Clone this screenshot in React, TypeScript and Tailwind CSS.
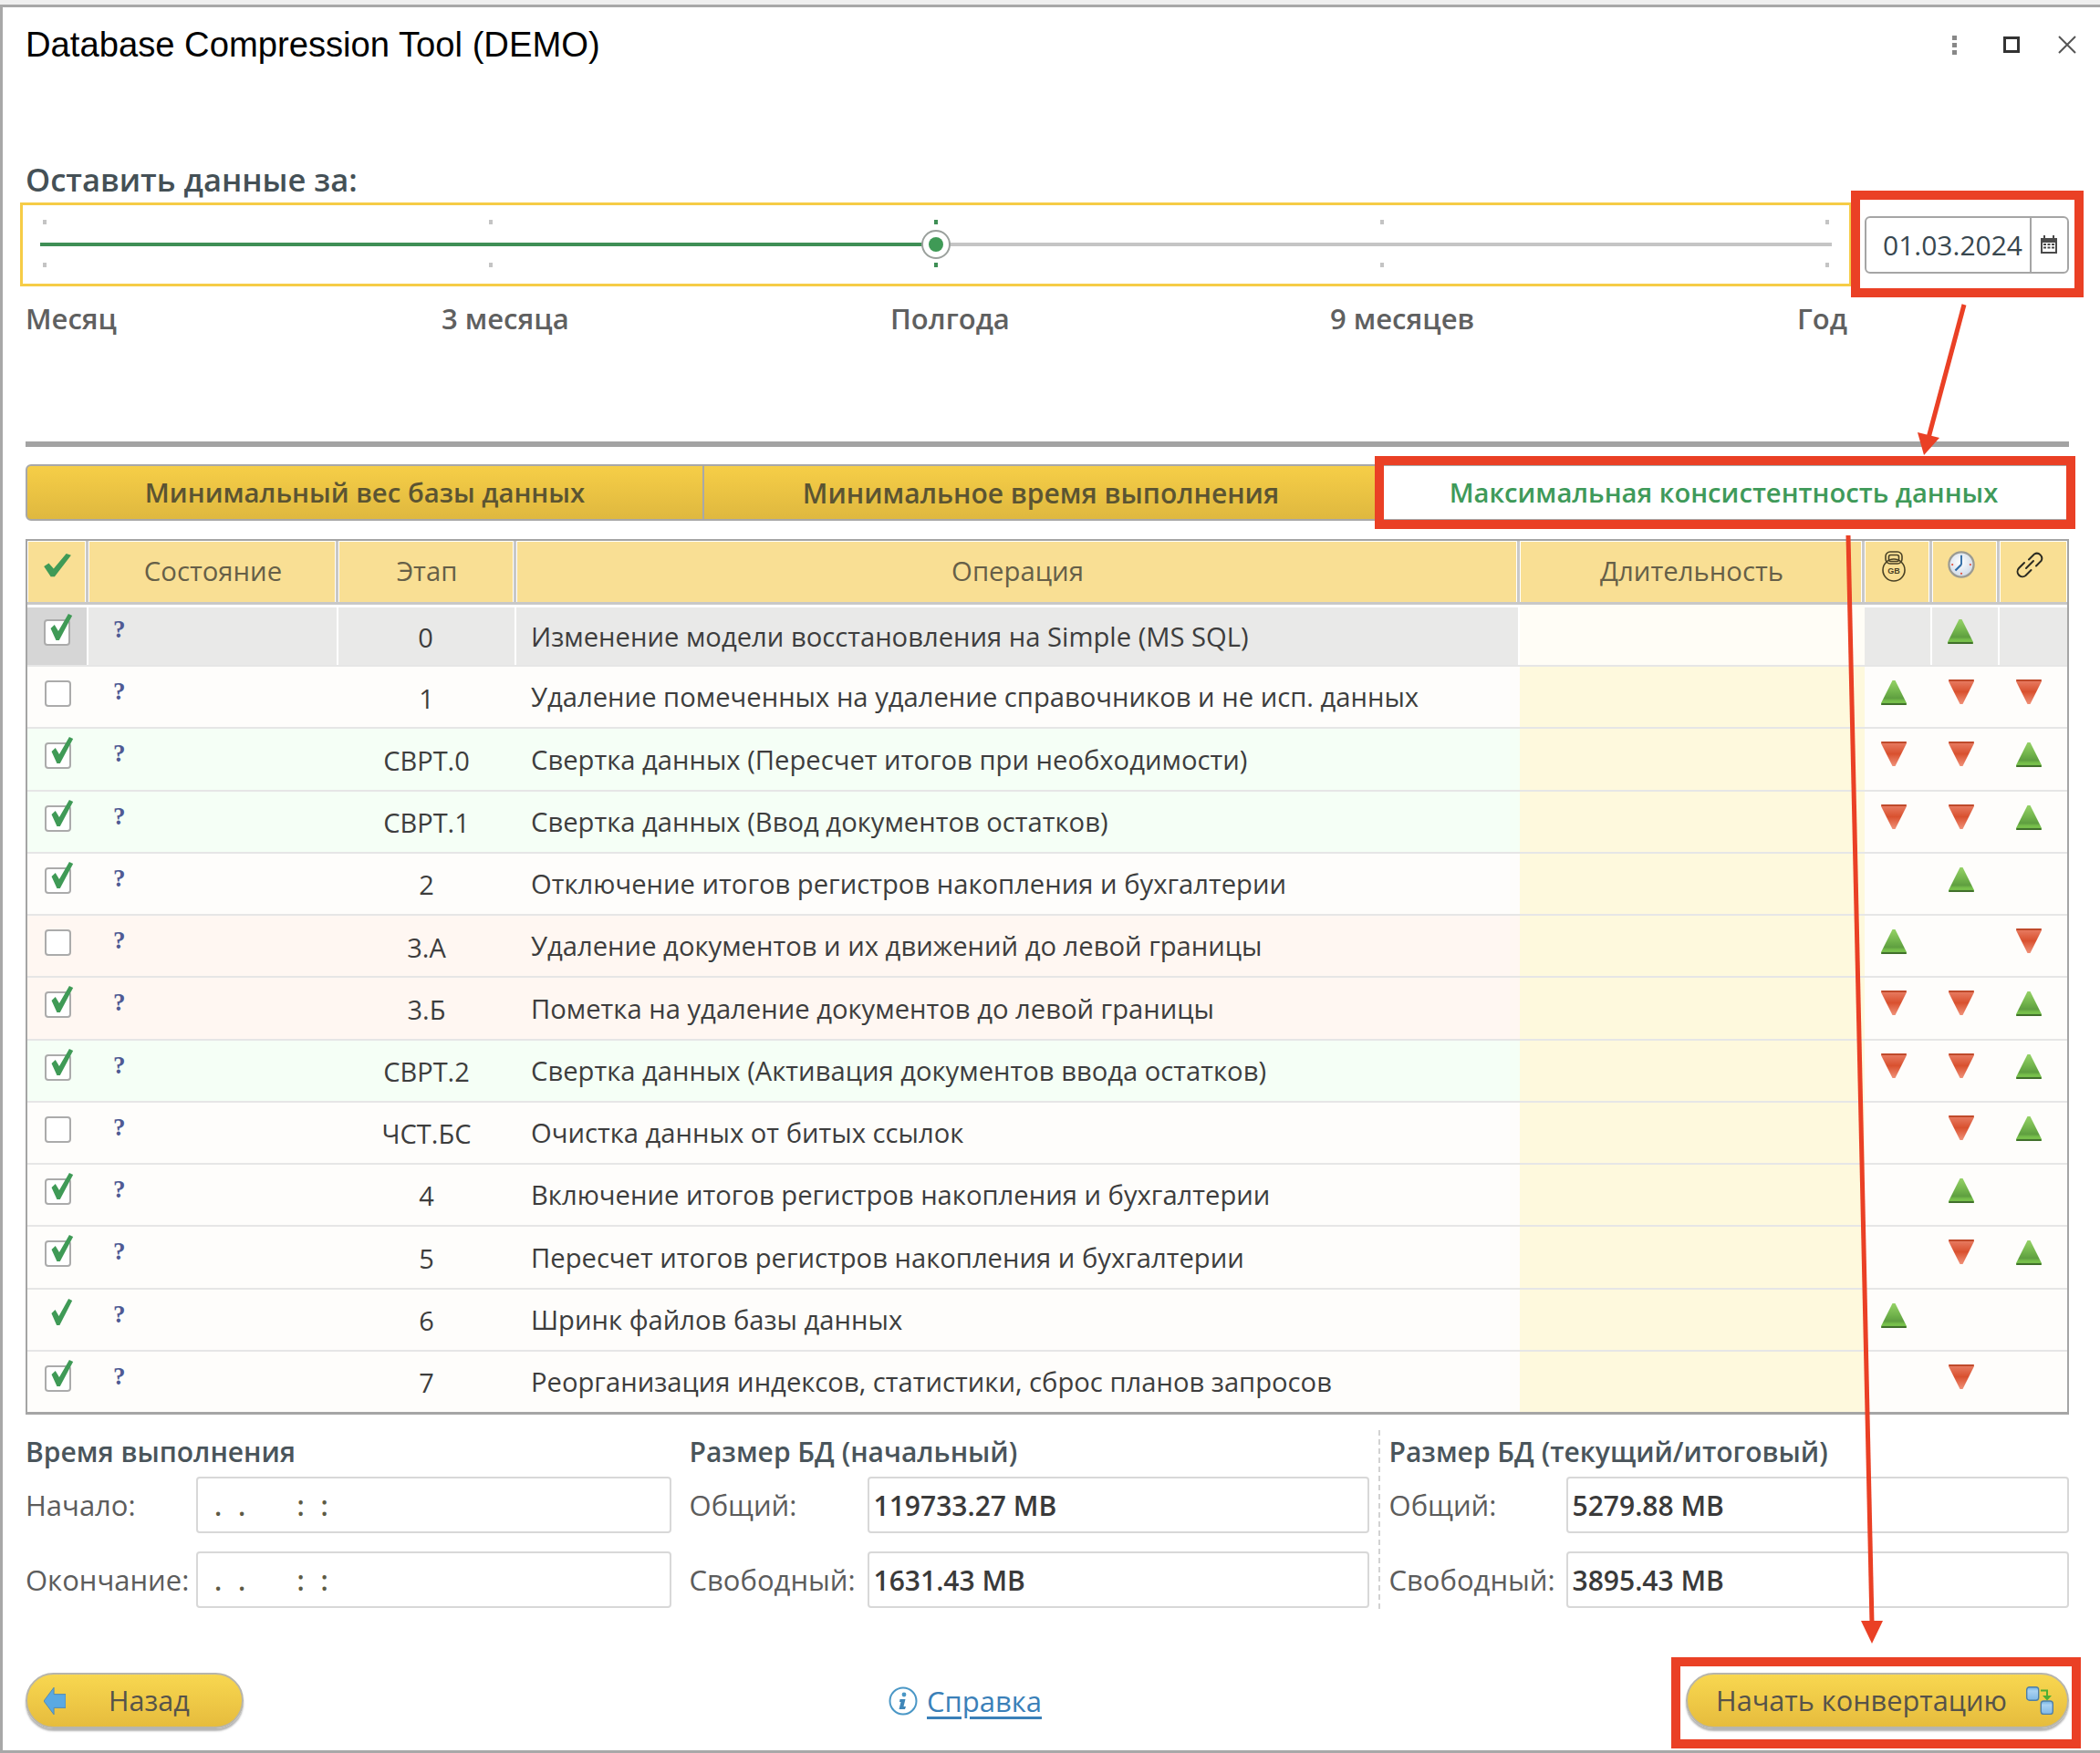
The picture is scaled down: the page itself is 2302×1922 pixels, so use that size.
import React from 'react';

type Tone = 'selected' | 'plain' | 'green' | 'orange';

const rows: { check: 'on' | 'off' | 'bare'; stage: string; op: string; marks: number[]; tone: Tone }[] = [
  { check: 'on', stage: '0', op: 'Изменение модели восстановления на Simple (MS SQL)', marks: [0, 1, 0], tone: 'selected' },
  { check: 'off', stage: '1', op: 'Удаление помеченных на удаление справочников и не исп. данных', marks: [1, -1, -1], tone: 'plain' },
  { check: 'on', stage: 'СВРТ.0', op: 'Свертка данных (Пересчет итогов при необходимости)', marks: [-1, -1, 1], tone: 'green' },
  { check: 'on', stage: 'СВРТ.1', op: 'Свертка данных (Ввод документов остатков)', marks: [-1, -1, 1], tone: 'green' },
  { check: 'on', stage: '2', op: 'Отключение итогов регистров накопления и бухгалтерии', marks: [0, 1, 0], tone: 'plain' },
  { check: 'off', stage: '3.А', op: 'Удаление документов и их движений до левой границы', marks: [1, 0, -1], tone: 'orange' },
  { check: 'on', stage: '3.Б', op: 'Пометка на удаление документов до левой границы', marks: [-1, -1, 1], tone: 'orange' },
  { check: 'on', stage: 'СВРТ.2', op: 'Свертка данных (Активация документов ввода остатков)', marks: [-1, -1, 1], tone: 'green' },
  { check: 'off', stage: 'ЧСТ.БС', op: 'Очистка данных от битых ссылок', marks: [0, -1, 1], tone: 'plain' },
  { check: 'on', stage: '4', op: 'Включение итогов регистров накопления и бухгалтерии', marks: [0, 1, 0], tone: 'plain' },
  { check: 'on', stage: '5', op: 'Пересчет итогов регистров накопления и бухгалтерии', marks: [0, -1, 1], tone: 'plain' },
  { check: 'bare', stage: '6', op: 'Шринк файлов базы данных', marks: [1, 0, 0], tone: 'plain' },
  { check: 'on', stage: '7', op: 'Реорганизация индексов, статистики, сброс планов запросов', marks: [0, -1, 0], tone: 'plain' },
];

const toneBg: Record<Tone, string> = {
  selected: 'bg-[#e9e9e8]',
  plain: 'bg-[#fefdfb]',
  green: 'bg-[#f5fff6]',
  orange: 'bg-[#fff7f2]',
};

const gridCols = 'grid grid-cols-[67px_274px_195px_1100px_378px_74px_74px_74px]';

function CheckMark({ className }: { className: string }) {
  return (
    <svg viewBox="0 0 32 32" className={className} preserveAspectRatio="none">
      <path d="M3 17 L8 13 L13 20 L26 1 L31 3 L14 30 L10 30 Z" fill="#3f9a56" />
    </svg>
  );
}

function Checkbox({ state }: { state: 'on' | 'off' | 'bare' }) {
  if (state === 'bare') {
    return (
      <div className="relative w-[29px] h-[29px]">
        <CheckMark className="absolute left-[5px] top-[-6px] w-[26px] h-[32px]" />
      </div>
    );
  }
  return (
    <div className="relative w-[29px] h-[29px] rounded-[4px] border-2 border-[#ababab] bg-white">
      {state === 'on' && <CheckMark className="absolute left-[3px] top-[-9px] w-[27px] h-[32px]" />}
    </div>
  );
}

function Triangle({ up }: { up: boolean }) {
  return (
    <svg viewBox="0 0 28 28" className="w-[28px] h-[28px]">
      {up ? (
        <>
          <path d="M12.5 1 L15.5 1 L28 26 L28 28 L0 28 L0 26 Z" fill="url(#triUp)" />
          <path d="M0.5 27 L27.5 27" stroke="#41702c" strokeWidth="2" />
        </>
      ) : (
        <>
          <path d="M0 0 L28 0 L28 2 L15.5 27 L12.5 27 L0 2 Z" fill="url(#triDown)" />
          <path d="M0.5 1 L27.5 1" stroke="#bf4a2b" strokeWidth="2" />
        </>
      )}
    </svg>
  );
}

function Kettlebell() {
  return (
    <svg viewBox="0 0 28 34" className="w-[28px] h-[34px]" fill="none" stroke="#4a4226" strokeWidth="1.6">
      <rect x="5" y="1" width="18" height="13" rx="5" />
      <rect x="8.5" y="4.5" width="11" height="7" rx="2" />
      <circle cx="14" cy="21" r="12" />
      <text x="14" y="25" textAnchor="middle" fontSize="9" fontWeight="700" fill="#4a4226" stroke="none" fontFamily="Liberation Sans, sans-serif">GB</text>
    </svg>
  );
}

function Clock() {
  return (
    <svg viewBox="0 0 32 32" className="w-[30px] h-[30px]">
      <circle cx="16" cy="16" r="14.5" fill="url(#clockFace)" stroke="#9b9b93" strokeWidth="2.4" />
      <path d="M16 16 L16 5" stroke="#2f6ca6" strokeWidth="2" />
      <path d="M16 16 L9 23" stroke="#2f6ca6" strokeWidth="2.4" />
      <circle cx="5.5" cy="16" r="1.2" fill="#e5533d" />
      <circle cx="26.5" cy="16" r="1.2" fill="#e5533d" />
      <circle cx="16" cy="26.5" r="1.2" fill="#e5533d" />
    </svg>
  );
}

function ChainLink() {
  return (
    <svg viewBox="0 0 30 30" className="w-[30px] h-[30px]" fill="none" stroke="#2b2b22" strokeWidth="2" strokeLinecap="round">
      <path d="M14 9.5 L20 3.5 A5.5 5.5 0 0 1 27.5 11 L22 16.5" />
      <path d="M9 13 L3 19 A5.5 5.5 0 0 0 10.5 27 L16.5 21" />
      <path d="M11 19 L19 11" />
    </svg>
  );
}

function HeaderCell({ children }: { children?: React.ReactNode }) {
  return (
    <div className="bg-white px-[1px] pt-[1px] border-r-[3px] border-[#c8c8c8]">
      <div className="h-full flex items-center justify-center pl-[2px] text-[29.3px] text-[#665f48] bg-[#f9df94]">{children}</div>
    </div>
  );
}

function HeaderIcon({ children, last, inset }: { children: React.ReactNode; last?: boolean; inset?: boolean }) {
  return (
    <div className={`bg-white px-[1px] pt-[1px] ${last ? '' : 'border-r-[3px] border-[#c8c8c8]'}`}>
      <div className={`h-full flex justify-center pt-[10px] bg-[#f9df94] ${inset ? 'pr-[8px]' : ''}`}>{children}</div>
    </div>
  );
}

function DataTable() {
  return (
    <div className="mt-[20px] w-[2240px] border-2 border-[#a5a5a5] border-b-[3px]">
      <div className={`${gridCols} h-[70px] border-b-[3px] border-[#c8c8c8]`}>
        <HeaderIcon><CheckMark className="w-[34px] h-[28px] mt-[2px]" /></HeaderIcon>
        <HeaderCell>Состояние</HeaderCell>
        <HeaderCell>Этап</HeaderCell>
        <HeaderCell>Операция</HeaderCell>
        <HeaderCell>Длительность</HeaderCell>
        <HeaderIcon inset><Kettlebell /></HeaderIcon>
        <HeaderIcon inset><Clock /></HeaderIcon>
        <HeaderIcon last inset><ChainLink /></HeaderIcon>
      </div>
      <div className="h-[885px] flex flex-col">
        {rows.map((row, i) => {
          const sel = row.tone === 'selected';
          const gap = sel ? 'border-r-2 border-t-[3px] border-white' : '';
          return (
            <div key={i} className={`${gridCols} flex-1 min-h-0 ${i < rows.length - 1 ? 'border-b-2 border-[#e6e6e6]' : ''}`}>
              <div className={`flex justify-center ${sel ? 'pt-[13px] bg-[#d6d6d6]' : `pt-[15px] ${toneBg[row.tone]}`} ${gap}`}>
                <Checkbox state={row.check} />
              </div>
              <div className={`pl-[27px] ${sel ? 'pt-[8px]' : 'pt-[11px]'} ${toneBg[row.tone]} ${gap} font-['Liberation_Serif',serif] font-bold text-[27px] leading-[32px] text-[#4f5a94]`}>?</div>
              <div className={`flex items-center justify-center pt-[2px] pr-[2px] text-[29px] text-[#3d3d3d] ${toneBg[row.tone]} ${gap}`}>{row.stage}</div>
              <div className={`flex items-center pl-[16px] pt-[2px] text-[29.2px] text-[#3d3d3d] whitespace-nowrap ${toneBg[row.tone]} ${gap}`}>{row.op}</div>
              <div className={sel ? 'bg-[#fffdf6]' : 'bg-[#fef9dd]'} />
              {row.marks.map((m, j) => (
                <div key={j} className={`flex justify-center pr-[10px] ${sel ? `pt-[12px] bg-[#e9e9e8] ${j < 2 ? gap : 'border-t-[3px] border-white'}` : 'pt-[14px] bg-[#fefdfb]'}`}>
                  {m !== 0 && <Triangle up={m > 0} />}
                </div>
              ))}
            </div>
          );
        })}
      </div>
    </div>
  );
}

function Field({ value, muted }: { value: string; muted?: boolean }) {
  return (
    <div className={`h-[62px] flex-1 min-w-0 rounded-[4px] border-2 border-[#d8d8d8] flex items-center bg-white ${muted ? 'pl-[18px] text-[#5d5a44] whitespace-pre font-semibold tracking-[5px]' : 'pl-[5px] font-semibold text-[#3a3a3a]'} text-[30px]`}>
      {value}
    </div>
  );
}

function InfoGroup({ title, items, labelWidth, width, muted }: { title: string; items: [string, string][]; labelWidth: string; width: string; muted?: boolean }) {
  return (
    <div className={width}>
      <div className="h-[38px] mb-[9px] flex items-center text-[30px] font-semibold text-[#4a555b]">{title}</div>
      <div className="flex flex-col gap-[20px]">
        {items.map(([label, value]) => (
          <div key={label} className="flex items-center">
            <div className={`${labelWidth} text-[31px] font-medium text-[#5c5c5c] whitespace-nowrap`}>{label}</div>
            <Field value={value} muted={muted} />
          </div>
        ))}
      </div>
    </div>
  );
}

const pillBtn = 'h-[61px] rounded-full border-2 border-[#b7b5ac] shadow-[0_3px_2px_rgba(120,120,120,0.55)] bg-gradient-to-b from-[#f8d750] to-[#e6bc3d] flex items-center text-[#56534a]';

export default function App() {
  return (
    <div className="relative w-[2302px] h-[1922px] pt-[5px] bg-[#efefef] overflow-hidden font-['Open_Sans',sans-serif]">
      <svg className="absolute w-0 h-0">
        <defs>
          <linearGradient id="triUp" x1="0" y1="0" x2="0" y2="1">
            <stop offset="0" stopColor="#95d266" />
            <stop offset="0.5" stopColor="#6fb14a" />
            <stop offset="0.72" stopColor="#5f9f40" />
            <stop offset="0.85" stopColor="#79c24c" />
            <stop offset="1" stopColor="#6fb548" />
          </linearGradient>
          <linearGradient id="triDown" x1="0" y1="0" x2="0" y2="1">
            <stop offset="0" stopColor="#e98067" />
            <stop offset="0.5" stopColor="#d9512f" />
            <stop offset="1" stopColor="#f09178" />
          </linearGradient>
          <radialGradient id="clockFace" cx="0.45" cy="0.4" r="0.7">
            <stop offset="0" stopColor="#ffffff" />
            <stop offset="1" stopColor="#c7d4e4" />
          </radialGradient>
          <linearGradient id="dbFill" x1="0" y1="0" x2="0" y2="1">
            <stop offset="0" stopColor="#6fb0e0" />
            <stop offset="0.3" stopColor="#a9d2f2" />
            <stop offset="1" stopColor="#7fb8e6" />
          </linearGradient>
        </defs>
      </svg>

      <div className="h-[1917px] border-t-[3px] border-b-[3px] border-l-[3px] border-[#a8a8a8] bg-white flex flex-col pl-[25px] pr-[34px]">
        {/* Title bar */}
        <div className="h-[82px] flex items-center justify-between">
          <div className="font-['Liberation_Sans',sans-serif] text-[38.2px] text-black">Database Compression Tool (DEMO)</div>
          <div className="flex items-center mr-[-8px]">
            <div className="flex flex-col gap-[3px] mr-[51px]">
              <span className="w-[5px] h-[5px] bg-[#888]" />
              <span className="w-[5px] h-[5px] bg-[#888]" />
              <span className="w-[5px] h-[5px] bg-[#888]" />
            </div>
            <div className="w-[18px] h-[18px] border-[3px] border-[#333] mr-[42px]" />
            <svg viewBox="0 0 20 20" className="w-[20px] h-[20px]" stroke="#555" strokeWidth="2">
              <path d="M1 1 L19 19 M19 1 L1 19" />
            </svg>
          </div>
        </div>

        {/* Period slider */}
        <div className="mt-[85px] h-[44px] flex items-center text-[34.5px] font-semibold text-[#445056]">Оставить данные за:</div>
        <div className="mt-[3px] -ml-[6px] flex items-center">
          <div className="w-[2008px] h-[92px] border-[3px] border-[#f6cc46] pt-[16px]">
            <div className="ml-[22px] w-[1958px] flex justify-between">
              <span className="w-[4px] h-[5px] bg-[#c4c4c4]" />
              <span className="w-[4px] h-[5px] bg-[#c4c4c4]" />
              <span className="w-[4px] h-[5px] bg-[#3f8f55]" />
              <span className="w-[4px] h-[5px] bg-[#c4c4c4]" />
              <span className="w-[4px] h-[5px] bg-[#c4c4c4]" />
            </div>
            <div className="relative mt-[20px] ml-[19px] w-[1964px] h-[4px] flex">
              <div className="w-[982px] bg-[#3f8f55]" />
              <div className="flex-1 bg-[#c5c5c5]" />
              <div className="absolute left-[966px] top-[-14px] w-[32px] h-[32px] rounded-full border-2 border-[#9aa09c] bg-white flex items-center justify-center">
                <div className="w-[16px] h-[16px] rounded-full bg-[#3f9a56]" />
              </div>
            </div>
            <div className="mt-[18px] ml-[22px] w-[1958px] flex justify-between">
              <span className="w-[4px] h-[5px] bg-[#c4c4c4]" />
              <span className="w-[4px] h-[5px] bg-[#c4c4c4]" />
              <span className="w-[4px] h-[5px] bg-[#3f8f55]" />
              <span className="w-[4px] h-[5px] bg-[#c4c4c4]" />
              <span className="w-[4px] h-[5px] bg-[#c4c4c4]" />
            </div>
          </div>
          <div className="ml-[14px] w-[224px] h-[63px] rounded-[6px] border-2 border-[#a5a5a5] flex">
            <div className="w-[179px] flex items-center justify-end pr-[8px] text-[30px] text-[#38474f]">01.03.2024</div>
            <div className="flex-1 border-l-2 border-[#a5a5a5] flex items-center justify-center pr-[2px]">
              <svg viewBox="0 0 18 20" className="w-[18px] h-[20px]">
                <path d="M0 3 H3 V0 H5 V3 H13 V0 H15 V3 H18 V20 H0 Z" fill="#4a4a4a" />
                <rect x="2" y="8" width="14" height="10" fill="#fff" />
                <path d="M3 9 h3 v2 h-3z M7.5 9 h3 v2 h-3z M12 9 h3 v2 h-3z M3 12.5 h3 v2 h-3z M7.5 12.5 h3 v2 h-3z M12 12.5 h3 v2 h-3z" fill="#4a4a4a" />
              </svg>
            </div>
          </div>
        </div>
        <div className="mt-[12px] h-[40px] grid grid-cols-[456px_492px_482px_512px_1fr] items-center text-[31px] font-semibold text-[#5f6060]">
          <span>Месяц</span>
          <span>3 месяца</span>
          <span>Полгода</span>
          <span>9 месяцев</span>
          <span>Год</span>
        </div>

        <div className="mt-[118px] h-[6px] bg-[#a3a3a3] shrink-0" />

        {/* Tabs */}
        <div className="mt-[19px] h-[62px] flex shrink-0 font-semibold whitespace-nowrap">
          <div className="w-[744px] rounded-l-[6px] border-2 border-[#a8a8a8] bg-gradient-to-b from-[#f6ce47] to-[#dfb83f] flex items-center justify-center pt-[1px] text-[29.3px] text-[#5b5432]">Минимальный вес базы данных</div>
          <div className="w-[740px] border-y-2 border-r-2 border-[#a8a8a8] bg-gradient-to-b from-[#f6ce47] to-[#dfb83f] flex items-center justify-center text-[30px] text-[#5b5432]">Минимальное время выполнения</div>
          <div className="w-[755px] border-y-2 border-[#a8a8a8] bg-white flex items-center justify-center pt-[1px] text-[29.2px] text-[#3f9a5a]">Максимальная консистентность данных</div>
        </div>

        <DataTable />

        {/* Summary fields */}
        <div className="mt-[21px] flex">
          <InfoGroup
            width="w-[708px]"
            labelWidth="w-[187px]"
            title="Время выполнения"
            muted
            items={[['Начало:', '. .    : :'], ['Окончание:', '. .    : :']]}
          />
          <div className="ml-[20px]">
            <InfoGroup
              width="w-[745px]"
              labelWidth="w-[195px]"
              title="Размер БД (начальный)"
              items={[['Общий:', '119733.27 MB'], ['Свободный:', '1631.43 MB']]}
            />
          </div>
          <div className="ml-[10px] mr-[10px] border-l-2 border-dashed border-[#d2d2d2] h-[196px] -mt-[4px]" />
          <InfoGroup
            width="w-[746px]"
            labelWidth="w-[194px]"
            title="Размер БД (текущий/итоговый)"
            items={[['Общий:', '5279.88 MB'], ['Свободный:', '3895.43 MB']]}
          />
        </div>

        {/* Footer */}
        <div className="mt-[70px] flex items-center">
          <div className={`${pillBtn} w-[239px] pl-[18px] text-[30.5px]`}>
            <svg viewBox="0 0 26 32" className="w-[24px] h-[32px]">
              <path d="M12 0 L0 16 L12 32 L12 24 L26 24 L26 8 L12 8 Z" fill="#5aa9e2" stroke="#4c87b5" strokeWidth="1" />
            </svg>
            <span className="ml-[47px]">Назад</span>
          </div>
          <div className="ml-[707px] flex items-center">
            <svg viewBox="0 0 32 32" className="w-[32px] h-[32px]">
              <circle cx="16" cy="16" r="14.5" fill="none" stroke="#4a97c6" strokeWidth="2" />
              <circle cx="17" cy="9" r="2.4" fill="#4a97c6" />
              <path d="M12.5 14 L18.5 14 L16.5 22 L19 22 L18 25 L11.5 25 L13.5 17 L12 17 Z" fill="#3f86b8" />
            </svg>
            <span className="ml-[10px] pt-[1px] text-[31px] text-[#3a80b8] underline underline-offset-[5px] decoration-[3px]">Справка</span>
          </div>
          <div className={`${pillBtn} ml-auto w-[420px] pl-[31px] text-[30.7px]`}>
            <span className="whitespace-nowrap">Начать конвертацию</span>
            <svg viewBox="0 0 30 31" className="ml-[21px] w-[30px] h-[31px]">
              <rect x="0.7" y="0.7" width="13" height="14.5" rx="3" fill="url(#dbFill)" stroke="#4e7fa6" strokeWidth="1.4" />
              <rect x="16.3" y="16" width="13" height="14.5" rx="3" fill="url(#dbFill)" stroke="#4e7fa6" strokeWidth="1.4" />
              <path d="M16 4.5 H23 V12" fill="none" stroke="#4fae33" strokeWidth="2" />
              <path d="M18 10 H28 L23 15.5 Z" fill="#4fae33" />
            </svg>
          </div>
        </div>
      </div>

      {/* Red annotations drawn over the form */}
      <div className="absolute left-[2029px] top-[209px] w-[255px] h-[117px] border-[10px] border-[#ea4025] pointer-events-none" />
      <div className="absolute left-[1507px] top-[500px] w-[768px] h-[80px] border-[10px] border-[#ea4025] pointer-events-none" />
      <div className="absolute left-[1832px] top-[1817px] w-[449px] h-[100px] border-[10px] border-[#ea4025] pointer-events-none" />
      <svg viewBox="0 0 2302 1922" className="absolute inset-0 w-[2302px] h-[1922px] pointer-events-none">
        <path d="M2153 334 L2114 480" stroke="#ea4025" strokeWidth="5" fill="none" />
        <path d="M2109 499 L2102 474 L2126 480 Z" fill="#ea4025" />
        <path d="M2026 587 L2052 1780" stroke="#ea4025" strokeWidth="5" fill="none" />
        <path d="M2052 1802 L2040 1777 L2064 1777 Z" fill="#ea4025" />
      </svg>
    </div>
  );
}
